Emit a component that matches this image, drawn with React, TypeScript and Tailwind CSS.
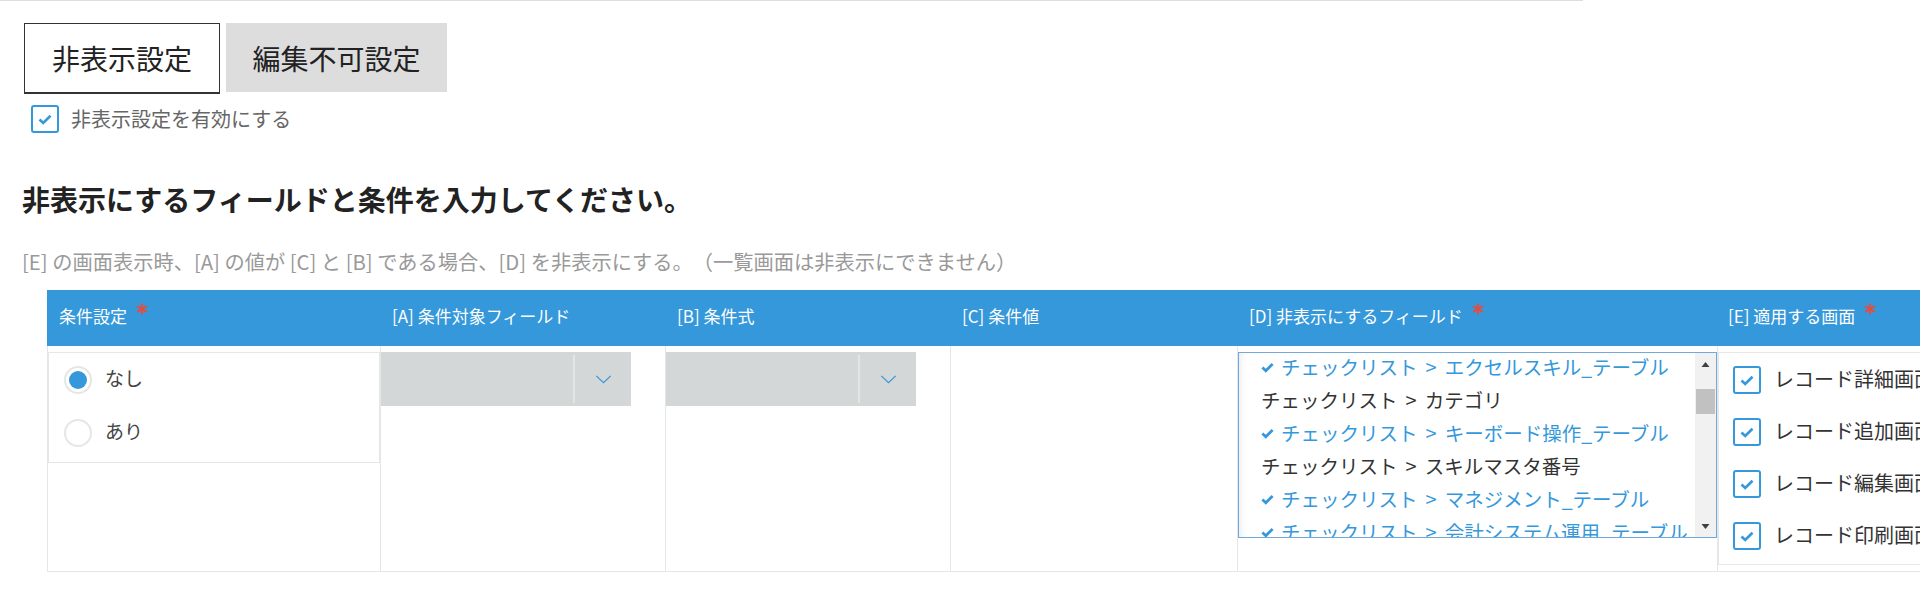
import React from "react";

const fields = [
  { parent: "チェックリスト", child: "エクセルスキル_テーブル", on: true },
  { parent: "チェックリスト", child: "カテゴリ", on: false },
  { parent: "チェックリスト", child: "キーボード操作_テーブル", on: true },
  { parent: "チェックリスト", child: "スキルマスタ番号", on: false },
  { parent: "チェックリスト", child: "マネジメント_テーブル", on: true },
  { parent: "チェックリスト", child: "会計システム運用_テーブル", on: true },
  { parent: "チェックリスト", child: "顧客対応_テーブル", on: false },
];

const screens = ["レコード詳細画面", "レコード追加画面", "レコード編集画面", "レコード印刷画面"];

function Tick({ className, width = 2.4 }: { className?: string; width?: number }) {
  return (
    <svg viewBox="0 0 14 11" className={className} fill="none">
      <path d="M1.5 5.5 L5.2 9 L12.5 1.8" stroke="currentColor" strokeWidth={width} />
    </svg>
  );
}

function CheckBox() {
  return (
    <span className="flex size-[28px] shrink-0 items-center justify-center rounded-[3px] border-2 border-[#3498db] bg-white text-[#3498db]">
      <Tick className="h-[11px] w-[14px]" width={2.6} />
    </span>
  );
}

function Radio({ checked }: { checked?: boolean }) {
  return (
    <span className="flex size-[28px] shrink-0 items-center justify-center rounded-full border-2 border-[#e6e6e6] bg-white">
      {checked && <span className="size-[18px] rounded-full bg-[#3498db]" />}
    </span>
  );
}

function Select() {
  return (
    <div className="flex h-[54px] w-[250px] bg-[#d4d7d7]">
      <div className="flex-1" />
      <div className="my-[3px] w-[2px] bg-[#e4e6e6]" />
      <div className="flex w-[56px] items-center justify-center">
        <svg viewBox="0 0 18 10" className="h-[9px] w-[17px]" fill="none">
          <path d="M1 1 L9 8.5 L17 1" stroke="#3498db" strokeWidth="1.4" />
        </svg>
      </div>
    </div>
  );
}

function Required() {
  return (
    <svg viewBox="0 0 12 12" className="ml-[9px] mt-[-14px] size-[12px]" fill="none">
      <path d="M6 0.5 V11.5 M1.2 3.2 L10.8 8.8 M1.2 8.8 L10.8 3.2" stroke="#e74c3c" strokeWidth="2" />
    </svg>
  );
}

function HeadCell({ w, children, req }: { w: string; children: React.ReactNode; req?: boolean }) {
  return (
    <div className={`flex shrink-0 items-center pb-[5px] pl-3 ${w}`}>
      <span className="text-[17px] text-white">{children}</span>
      {req && <Required />}
    </div>
  );
}

export default function App() {
  return (
    <div className="h-[593px] w-full overflow-hidden bg-white font-['Noto_Sans_CJK_JP','Noto_Sans',sans-serif] text-[#333] [text-spacing-trim:space-all]">
      <div className="h-px w-[1583px] bg-[#dedede]" />

      <div className="ml-[24px] mt-[22px] flex items-start gap-[6px]">
        <button className="h-[71px] w-[196px] border border-b-2 border-[#333] bg-white text-[28px] text-[#222]">
          非表示設定
        </button>
        <button className="h-[69px] w-[221px] bg-[#dddddd] text-[28px] text-[#222]">編集不可設定</button>
      </div>

      <label className="ml-[31px] mt-[10px] flex items-center gap-[12px]">
        <CheckBox />
        <span className="text-[20px] text-[#666]">非表示設定を有効にする</span>
      </label>

      <h2 className="ml-[22px] mt-[47px] text-[28px] font-bold leading-[36px] text-[#222]">
        非表示にするフィールドと条件を入力してください。
      </h2>

      <p className="ml-[22px] mt-[31px] text-[20.25px] leading-[28px] text-[#999]">
        [E] の画面表示時、[A] の値が [C] と [B] である場合、[D] を非表示にする。（一覧画面は非表示にできません）
      </p>

      <div className="ml-[47px] mt-[14px] w-[2000px]">
        <div className="flex h-[56px] bg-[#3498db]">
          <HeadCell w="w-[333px]" req>
            条件設定
          </HeadCell>
          <HeadCell w="w-[285px]">[A] 条件対象フィールド</HeadCell>
          <HeadCell w="w-[285px]">[B] 条件式</HeadCell>
          <HeadCell w="w-[287px]">[C] 条件値</HeadCell>
          <HeadCell w="w-[479px]" req>
            [D] 非表示にするフィールド
          </HeadCell>
          <HeadCell w="w-[400px]" req>
            [E] 適用する画面
          </HeadCell>
        </div>

        <div className="flex h-[226px] border-b border-l border-[#e3e7e8]">
          <div className="w-[333px] shrink-0 border-r border-[#e3e7e8] pt-[6px]">
            <div className="h-[111px] border border-[#e6e8e8]">
              <div className="flex h-[53px] items-center gap-[13px] pl-[15px]">
                <Radio checked />
                <span className="pb-[3px] text-[19px] text-[#444]">なし</span>
              </div>
              <div className="flex h-[53px] items-center gap-[13px] pl-[15px]">
                <Radio />
                <span className="pb-[3px] text-[19px] text-[#444]">あり</span>
              </div>
            </div>
          </div>

          <div className="w-[285px] shrink-0 border-r border-[#e3e7e8] pt-[6px]">
            <Select />
          </div>
          <div className="w-[285px] shrink-0 border-r border-[#e3e7e8] pt-[6px]">
            <Select />
          </div>
          <div className="w-[287px] shrink-0 border-r border-[#e3e7e8]" />

          <div className="w-[479px] shrink-0 pt-[6px]">
            <div className="flex h-[186px] overflow-hidden border border-[#6fa9de] bg-white shadow-[inset_6px_0_8px_-6px_rgba(0,0,0,0.12)]">
              <ul className="flex-1 overflow-hidden">
                {fields.map((f) => (
                  <li
                    key={f.child}
                    className={`flex h-[33px] items-center whitespace-nowrap pb-[5px] pl-[22px] text-[19.5px] ${
                      f.on ? "text-[#3498db]" : "text-[#333]"
                    }`}
                  >
                    {f.on && <Tick className="mr-[7px] h-[11px] w-[13px]" width={3} />}
                    {f.parent}
                    <span className="mx-[8px] text-[20px]">&gt;</span>
                    {f.child}
                  </li>
                ))}
              </ul>
              <div className="flex w-[21px] shrink-0 flex-col bg-[#f1f1f1]">
                <div className="flex h-[22px] items-center justify-center">
                  <svg viewBox="0 0 8 5" className="h-[5px] w-[9px]">
                    <path d="M0 5 L4 0 L8 5 Z" fill="#404040" />
                  </svg>
                </div>
                <div className="mx-[1px] mt-[14px] h-[25px] bg-[#c1c1c1]" />
                <div className="flex-1" />
                <div className="flex h-[22px] items-center justify-center">
                  <svg viewBox="0 0 8 5" className="h-[5px] w-[9px]">
                    <path d="M0 0 L4 5 L8 0 Z" fill="#404040" />
                  </svg>
                </div>
              </div>
            </div>
          </div>

          <div className="w-[400px] shrink-0 border-l border-[#e3e7e8] pt-[6px]">
            <div className="h-[213px] border-y border-l border-[#e6e8e8] py-px">
              {screens.map((s) => (
                <div key={s} className="flex h-[52px] items-center gap-[13px] pl-[14px]">
                  <CheckBox />
                  <span className="whitespace-nowrap pb-[2px] text-[20px] text-[#333]">{s}</span>
                </div>
              ))}
            </div>
          </div>
        </div>
      </div>
    </div>
  );
}
